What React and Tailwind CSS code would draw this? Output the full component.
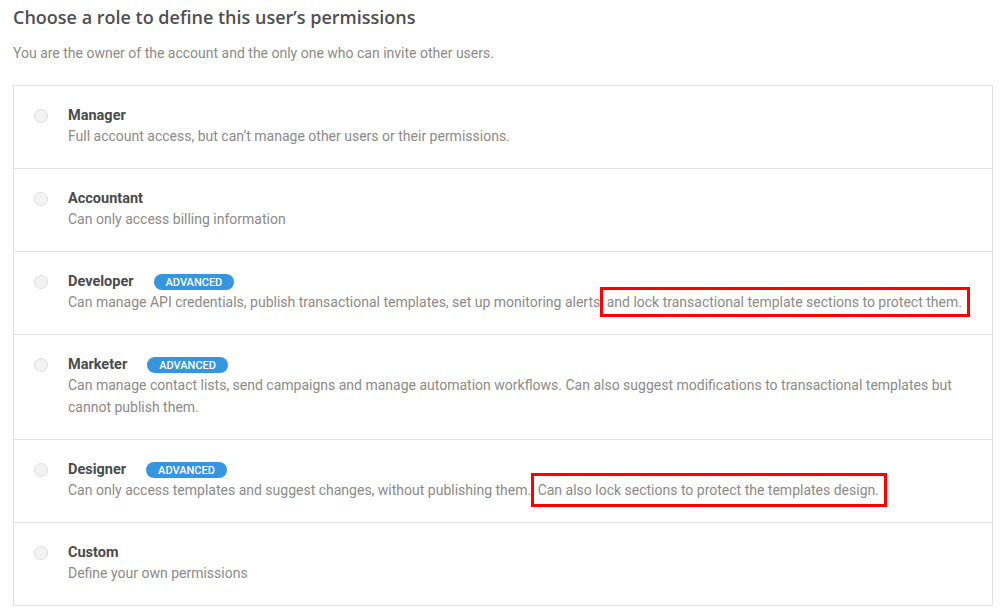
const ROLES = [
  { id: 'manager', name: 'Manager', desc: 'Full account access, but can’t manage other users or their permissions.' },
  { id: 'accountant', name: 'Accountant', desc: 'Can only access billing information' },
  {
    id: 'developer',
    name: 'Developer',
    advanced: true,
    desc: 'Can manage API credentials, publish transactional templates, set up monitoring alerts',
    mark: ' and lock transactional template sections to protect them.',
    markPad: 'py-[4px]',
  },
  {
    id: 'marketer',
    name: 'Marketer',
    advanced: true,
    desc: 'Can manage contact lists, send campaigns and manage automation workflows. Can also suggest modifications to transactional templates but cannot publish them.',
  },
  {
    id: 'designer',
    name: 'Designer',
    advanced: true,
    desc: 'Can only access templates and suggest changes, without publishing them.',
    mark: ' Can also lock sections to protect the templates design.',
    markPad: 'py-[6px]',
  },
  { id: 'custom', name: 'Custom', desc: 'Define your own permissions' },
]

function RoleRow({ role }) {
  return (
    <div className="flex items-start border-b border-[#e2e2e2] last:border-b-0 pl-[20px] pr-[10px] pt-[21px] pb-[21px]">
      <span className="mt-[2px] w-[14px] h-[14px] rounded-full border border-[#dedede] bg-[#f3f3f3] shrink-0" />
      <div className="ml-[20px]">
        <div className="flex items-center leading-[18px]">
          <span className="text-[14.5px] font-bold text-[#4b4b4b]">{role.name}</span>
          {role.advanced && (
            <span className="ml-[20px] rounded-full bg-[#3695e0] text-white text-[11px] font-medium leading-[15px] px-[12px] pt-[1px]">
              ADVANCED
            </span>
          )}
        </div>
        <p className="text-[14px] leading-[22px] text-[#8c8a88]">
          {role.desc}
          {role.mark && (
            <span className={`whitespace-nowrap border-[3px] border-[#ff0000] pr-[5px] ${role.markPad}`}>{role.mark}</span>
          )}
        </p>
      </div>
    </div>
  )
}

export default function App() {
  return (
    <div className="bg-white min-h-[614px] px-[13px] pt-[5px] font-['Roboto',sans-serif]">
      <h1 className="font-['Open_Sans',sans-serif] font-semibold text-[18px] leading-[24px] text-[#4f4f52]">
        Choose a role to define this user’s permissions
      </h1>
      <p className="mt-[14px] text-[14px] leading-[20px] text-[#8c8a88]">
        You are the owner of the account and the only one who can invite other users.
      </p>
      <div className="mt-[22px] w-[980px] border border-[#e2e2e2]">
        {ROLES.map(role => (
          <RoleRow key={role.id} role={role} />
        ))}
      </div>
    </div>
  )
}
